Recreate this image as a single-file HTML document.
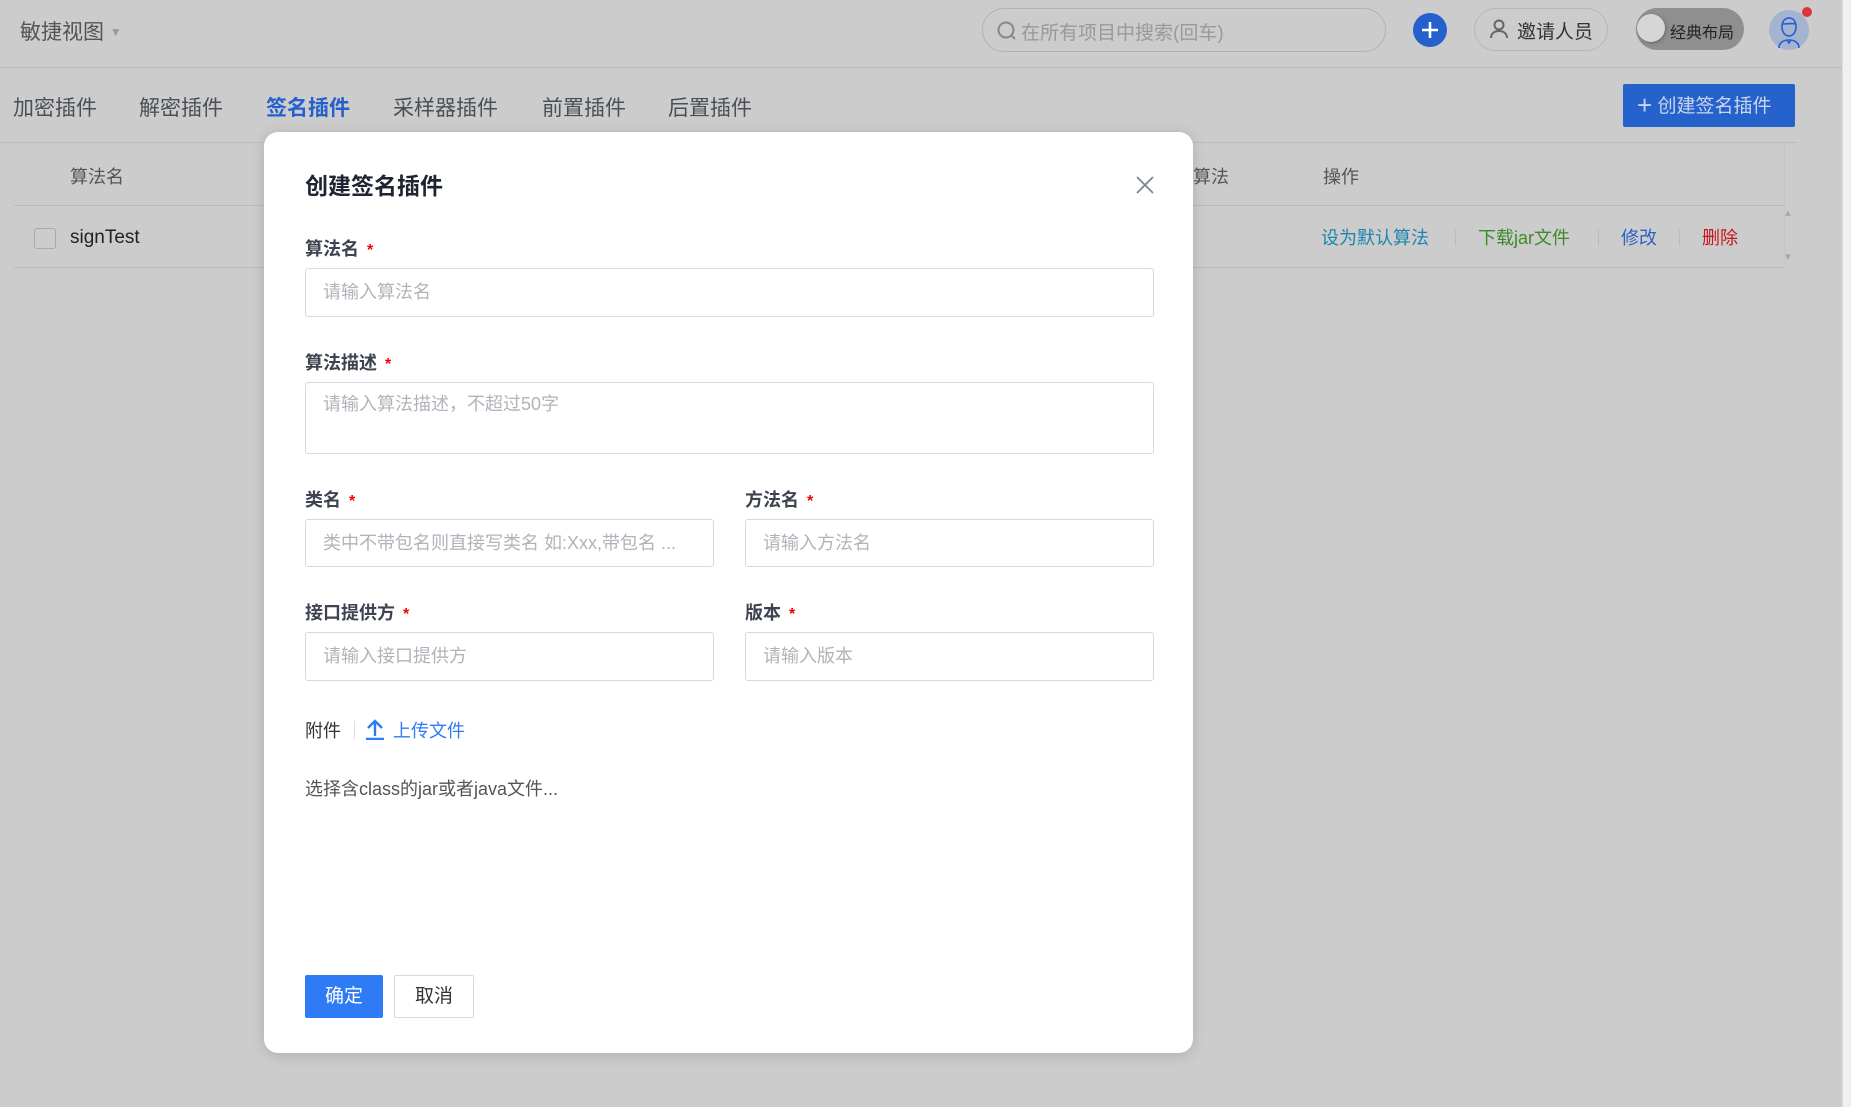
<!DOCTYPE html>
<html><head><meta charset="utf-8"><style>
*{margin:0;padding:0;box-sizing:border-box}
body{width:1851px;height:1107px;overflow:hidden;background:#ccc;font-family:"Liberation Sans","Noto Sans CJK SC",sans-serif;position:relative;color:#333}
.a{position:absolute;white-space:nowrap}
.tab{position:absolute;top:92px;font-size:21px;color:#4a4f57}
.lbl{position:absolute;font-size:18px;font-weight:bold;color:#3d4350}
.lbl i{color:#e00;font-style:normal;margin-left:8px;font-size:16px}
.inp{position:absolute;border:1px solid #d6d9e0;border-radius:3px;background:#fff;font-size:18px;color:#b0b3ba;padding-left:17px}
</style></head><body>
<div class="a" style="left:20px;top:16px;font-size:21px;color:#555">敏捷视图 <span style="font-size:12px;color:#999;vertical-align:3px">▼</span></div>
<div class="a" style="left:0;top:67px;width:1842px;height:1px;background:#b9bcc4"></div>
<div class="a" style="left:982px;top:8px;width:404px;height:44px;border:1px solid #aeb1b7;border-radius:22px"></div>
<svg class="a" style="left:996px;top:20px" width="22" height="22" viewBox="0 0 22 22"><circle cx="10" cy="10" r="7.5" fill="none" stroke="#888" stroke-width="2"/><path d="M15 15l4 4" stroke="#888" stroke-width="2"/></svg>
<div class="a" style="left:1021px;top:18px;font-size:19px;color:#999">在所有项目中搜索(回车)</div>
<div class="a" style="left:1413px;top:13px;width:34px;height:34px;border-radius:50%;background:#2461cc"></div>
<svg class="a" style="left:1413px;top:13px" width="34" height="34"><path d="M17 9v16M9 17h16" stroke="#fff" stroke-width="2.6"/></svg>
<div class="a" style="left:1474px;top:8px;width:134px;height:43px;border:1px solid #b3b6bc;border-radius:22px"></div>
<svg class="a" style="left:1488px;top:18px" width="22" height="22" viewBox="0 0 22 22"><circle cx="11" cy="7" r="4.5" fill="none" stroke="#666" stroke-width="2"/><path d="M3 20c0-5 4-7 8-7s8 2 8 7" fill="none" stroke="#666" stroke-width="2"/></svg>
<div class="a" style="left:1517px;top:17px;font-size:19px;color:#333">邀请人员</div>
<div class="a" style="left:1636px;top:8px;width:108px;height:42px;border-radius:21px;background:#8f8f8f"></div>
<div class="a" style="left:1637px;top:14px;width:28px;height:28px;border-radius:50%;background:#d6d6d6;box-shadow:1px 1px 3px #666"></div>
<div class="a" style="left:1670px;top:19px;font-size:16px;color:#222">经典布局</div>
<div class="a" style="left:1769px;top:10px;width:40px;height:40px;border-radius:50%;background:#a4b4cf"></div>
<svg class="a" style="left:1769px;top:10px" width="40" height="40"><path d="M13 17c0-6 3-9 7-9s7 3 7 9c0 5-3 9-7 9s-7-4-7-9zM13 14c3 0 11-1 14 0M10 38c0-5 4-8 10-8s10 3 10 8M18 30l2 3 2-3" fill="none" stroke="#2a5bd0" stroke-width="1.6"/></svg>
<div class="a" style="left:1802px;top:7px;width:10px;height:10px;border-radius:50%;background:#d9363e"></div>
<div class="a" style="left:1842px;top:0;width:9px;height:1107px;background:#f0f0f0;border-left:1px solid #ddd"></div>
<div class="tab" style="left:13px">加密插件</div>
<div class="tab" style="left:139px">解密插件</div>
<div class="tab" style="left:266px;color:#2561cc;font-weight:bold">签名插件</div>
<div class="tab" style="left:393px">采样器插件</div>
<div class="tab" style="left:542px">前置插件</div>
<div class="tab" style="left:668px">后置插件</div>
<div class="a" style="left:1623px;top:84px;width:172px;height:43px;background:#2562cc;border-radius:2px;color:#c9d6ee;font-size:19px;line-height:43px;padding-left:14px"><span style="font-size:26px;vertical-align:-2px">+</span> 创建签名插件</div>
<div class="a" style="left:0;top:142px;width:1798px;height:1px;background:#b9bcc4"></div>
<div class="a" style="left:70px;top:163px;font-size:18px;color:#555">算法名</div>
<div class="a" style="left:1193px;top:163px;font-size:18px;color:#555">算法</div>
<div class="a" style="left:1323px;top:163px;font-size:18px;color:#555">操作</div>
<div class="a" style="left:14px;top:205px;width:1770px;height:1px;background:#bbb"></div>
<div class="a" style="left:34px;top:228px;width:22px;height:21px;border:1px solid #aaa;border-radius:3px"></div>
<div class="a" style="left:70px;top:227px;font-size:19px;color:#222">signTest</div>
<div class="a" style="left:1321px;top:224px;font-size:18px;color:#1a86b0">设为默认算法</div>
<div class="a" style="left:1455px;top:230px;width:1px;height:16px;background:#bbb"></div>
<div class="a" style="left:1478px;top:224px;font-size:18px;color:#3d8a2c">下载jar文件</div>
<div class="a" style="left:1598px;top:230px;width:1px;height:16px;background:#bbb"></div>
<div class="a" style="left:1621px;top:224px;font-size:18px;color:#2a62c8">修改</div>
<div class="a" style="left:1679px;top:230px;width:1px;height:16px;background:#bbb"></div>
<div class="a" style="left:1702px;top:224px;font-size:18px;color:#c8161d">删除</div>
<div class="a" style="left:14px;top:267px;width:1770px;height:1px;background:#bbb"></div>
<div class="a" style="left:1784px;top:142px;width:1px;height:125px;background:#c6c6c6"></div>
<div class="a" style="left:1783px;top:208px;font-size:10px;color:#aaa">▲</div>
<div class="a" style="left:1783px;top:252px;font-size:10px;color:#aaa">▼</div>
<div class="a" style="left:264px;top:132px;width:929px;height:921px;background:#fff;border-radius:14px;box-shadow:0 2px 14px rgba(0,0,0,.15)"></div>
<div class="a" style="left:305px;top:167px;font-size:23px;font-weight:bold;color:#1f2430">创建签名插件</div>
<svg class="a" style="left:1135px;top:175px" width="20" height="20"><path d="M2 2l16 16M18 2L2 18" stroke="#7d828c" stroke-width="1.8"/></svg>
<div class="lbl" style="left:305px;top:235px">算法名<i>*</i></div>
<div class="inp" style="left:305px;top:268px;width:849px;height:49px;line-height:47px">请输入算法名</div>
<div class="lbl" style="left:305px;top:349px">算法描述<i>*</i></div>
<div class="inp" style="left:305px;top:382px;width:849px;height:72px;line-height:20px;padding-top:11px">请输入算法描述，不超过50字</div>
<div class="lbl" style="left:305px;top:486px">类名<i>*</i></div>
<div class="lbl" style="left:745px;top:486px">方法名<i>*</i></div>
<div class="inp" style="left:305px;top:519px;width:409px;height:48px;line-height:46px">类中不带包名则直接写类名 如:Xxx,带包名 ...</div>
<div class="inp" style="left:745px;top:519px;width:409px;height:48px;line-height:46px">请输入方法名</div>
<div class="lbl" style="left:305px;top:599px">接口提供方<i>*</i></div>
<div class="lbl" style="left:745px;top:599px">版本<i>*</i></div>
<div class="inp" style="left:305px;top:632px;width:409px;height:49px;line-height:47px">请输入接口提供方</div>
<div class="inp" style="left:745px;top:632px;width:409px;height:49px;line-height:47px">请输入版本</div>
<div class="a" style="left:305px;top:717px;font-size:18px;color:#333">附件</div>
<div class="a" style="left:354px;top:721px;width:1px;height:18px;background:#ddd"></div>
<svg class="a" style="left:364px;top:718px" width="22" height="22"><path d="M11 18V4M4 10l7-7 7 7M2 21h18" fill="none" stroke="#2f7bf5" stroke-width="2.4"/></svg>
<div class="a" style="left:393px;top:717px;font-size:18px;color:#2f7bf5">上传文件</div>
<div class="a" style="left:305px;top:775px;font-size:18px;color:#555">选择含class的jar或者java文件...</div>
<div class="a" style="left:305px;top:975px;width:78px;height:43px;background:#2f7bf5;border-radius:2px;color:#fff;font-size:19px;line-height:43px;text-align:center">确定</div>
<div class="a" style="left:394px;top:975px;width:80px;height:43px;border:1px solid #d6d9e0;border-radius:2px;color:#333;font-size:19px;line-height:41px;text-align:center">取消</div>
</body></html>
